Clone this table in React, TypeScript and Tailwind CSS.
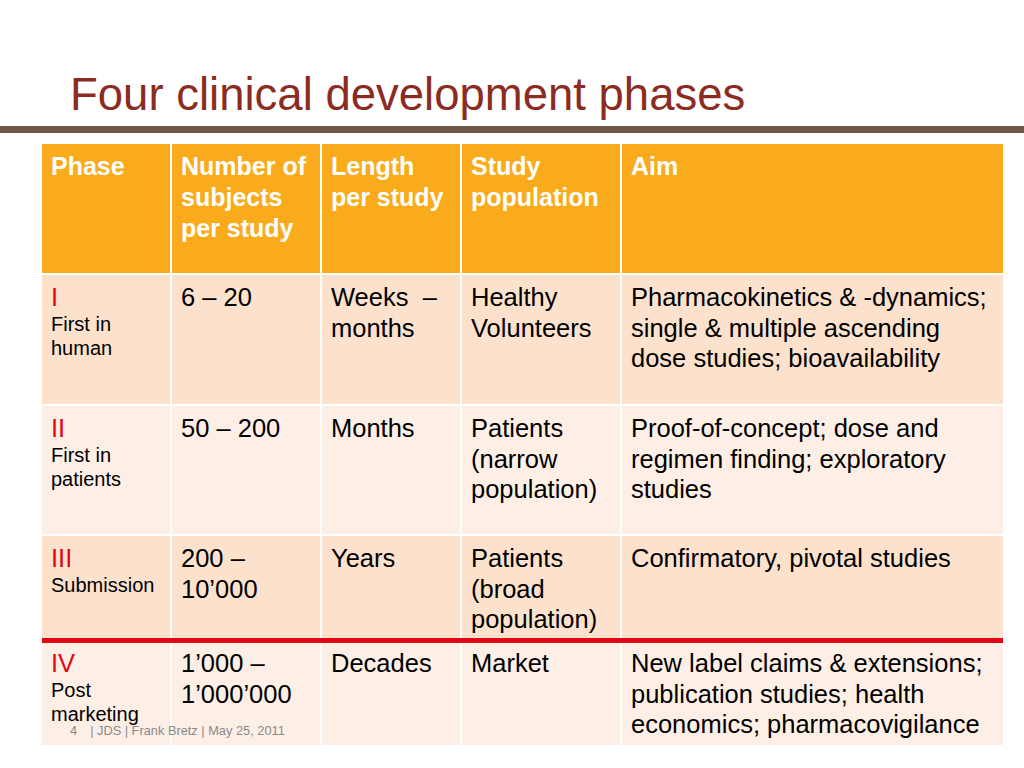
const header = [
  ["Phase"],
  ["Number of", "subjects", "per study"],
  ["Length", "per study"],
  ["Study", "population"],
  ["Aim"],
];

type Row = {
  num: string;
  label: string[];
  cells: string[][];
  dark: boolean;
  height: string;
  pad: string;
};

const rows: Row[] = [
  {
    num: "I",
    label: ["First in", "human"],
    cells: [
      ["6 – 20"],
      ["Weeks\u00a0 –", "months"],
      ["Healthy", "Volunteers"],
      ["Pharmacokinetics & -dynamics;", "single & multiple ascending", "dose studies; bioavailability"],
    ],
    dark: true,
    height: "h-[129px]",
    pad: "pt-[7px]",
  },
  {
    num: "II",
    label: ["First in", "patients"],
    cells: [
      ["50 – 200"],
      ["Months"],
      ["Patients", "(narrow", "population)"],
      ["Proof-of-concept; dose and", "regimen finding; exploratory", "studies"],
    ],
    dark: false,
    height: "h-[128px]",
    pad: "pt-[7px]",
  },
  {
    num: "III",
    label: ["Submission"],
    cells: [
      ["200 –", "10’000"],
      ["Years"],
      ["Patients", "(broad", "population)"],
      ["Confirmatory, pivotal studies"],
    ],
    dark: true,
    height: "h-[102px]",
    pad: "pt-[7px]",
  },
  {
    num: "IV",
    label: ["Post", "marketing"],
    cells: [
      ["1’000 –", "1’000’000"],
      ["Decades"],
      ["Market"],
      ["New label claims & extensions;", "publication studies; health", "economics; pharmacovigilance"],
    ],
    dark: false,
    height: "h-[102px]",
    pad: "pt-[5px]",
  },
];

const cols = "grid grid-cols-[128px_148px_138px_158px_381px] gap-x-[2px]";

function Lines({ lines }: { lines: string[] }) {
  return (
    <>
      {lines.map((l, i) => (
        <div key={i} className="whitespace-nowrap">
          {l}
        </div>
      ))}
    </>
  );
}

function TableRow({ row }: { row: Row }) {
  const bg = row.dark ? "bg-[#fce2cd]" : "bg-[#fdefe6]";
  return (
    <div className={`${cols} ${row.height}`}>
      <div className={`${bg} pl-[9px] ${row.pad}`}>
        <div className="text-[25.5px] leading-[31px] text-[#e30613]">{row.num}</div>
        <div className="text-[20px] leading-[23.5px] text-black">
          <Lines lines={row.label} />
        </div>
      </div>
      {row.cells.map((c, i) => (
        <div key={i} className={`${bg} pl-[9px] ${row.pad} text-[25.5px] leading-[30.5px] text-black`}>
          <Lines lines={c} />
        </div>
      ))}
    </div>
  );
}

export default function App() {
  return (
    <div className="relative w-[1024px] h-[768px] overflow-hidden bg-white font-['Liberation_Sans',Arial,sans-serif]">
      <h1 className="pl-[70px] pt-[69px] text-[45.5px] leading-[52px] font-normal text-[#8c2b1f]">
        Four clinical development phases
      </h1>
      <div className="mt-[5px] h-[7px] bg-[#6e5747]" />

      <div className="ml-[42px] mt-[11px] w-[961px] flex flex-col">
        <div className={`${cols} h-[129px]`}>
          {header.map((h, i) => (
            <div
              key={i}
              className="bg-[#f9ab1c] pl-[9px] pt-[7px] text-[25px] leading-[31px] font-bold text-white"
            >
              <Lines lines={h} />
            </div>
          ))}
        </div>
        <div className="h-[2px]" />
        <TableRow row={rows[0]} />
        <div className="h-[2px]" />
        <TableRow row={rows[1]} />
        <div className="h-[2px]" />
        <TableRow row={rows[2]} />
        <div className="h-[5px] bg-[#e30613]" />
        <TableRow row={rows[3]} />
      </div>

      <div className="absolute left-[70px] top-[723px] flex text-[12.8px] leading-[15px] text-[#8a8a8a]">
        <span>4</span>
        <span className="ml-[13px]">| JDS | Frank Bretz | May 25, 2011</span>
      </div>
    </div>
  );
}
